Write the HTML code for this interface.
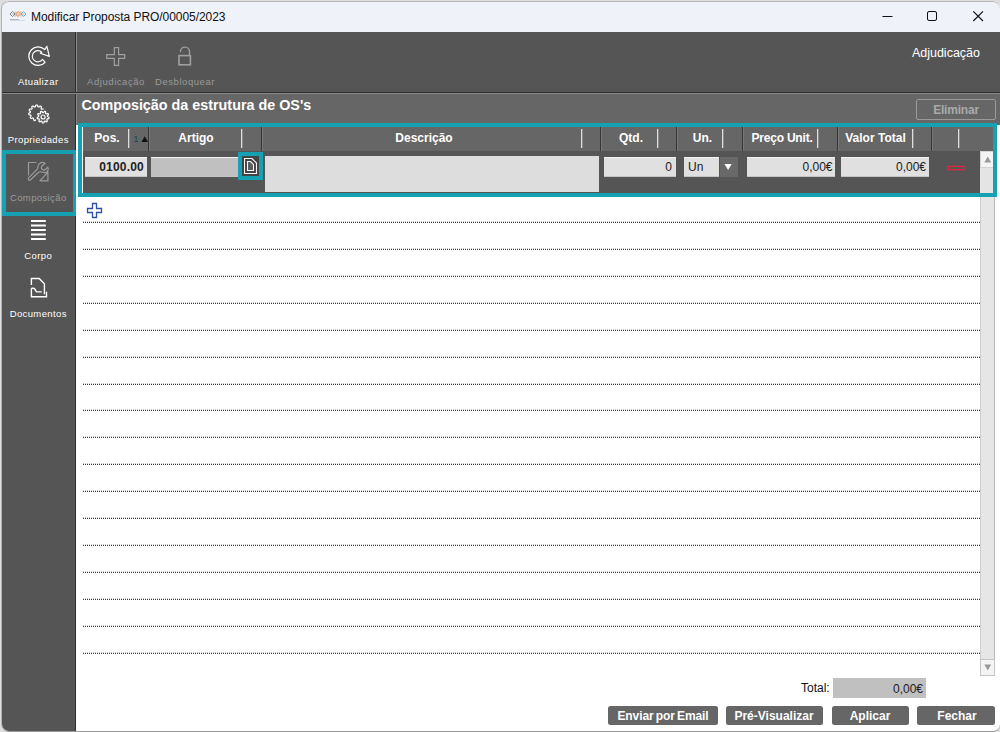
<!DOCTYPE html>
<html lang="pt">
<head>
<meta charset="utf-8">
<title>Modificar Proposta PRO/00005/2023</title>
<style>
*{box-sizing:border-box;margin:0;padding:0}
html,body{width:1000px;height:732px;overflow:hidden;background:#dedede;font-family:"Liberation Sans",sans-serif;}
.abs{position:absolute}
#win{position:absolute;left:2px;top:1px;width:998px;height:730px;background:#fff;border-radius:7px;overflow:hidden;box-shadow:-1px 0 0 0 #b4b4b4,0 1px 0 0 #9a9a9a;}
#title{position:absolute;left:0;top:0;width:998px;height:31px;background:#eff2f9;box-shadow:inset 0 1px 0 #b9b9b9;border-radius:7px 7px 0 0}
#title .txt{position:absolute;left:29px;top:8.500px;font-size:12px;color:#111;white-space:nowrap;letter-spacing:-0.05px}
#side{position:absolute;left:0;top:31px;width:73px;height:699px;background:#555;}
#vline{position:absolute;left:73px;top:31px;width:2px;height:699px;background:#888;border-left:1px solid #2e2e2e}
#hline{position:absolute;left:0;top:91px;width:998px;height:2px;background:#888;border-top:1px solid #2e2e2e}
#top{position:absolute;left:75px;top:31px;width:923px;height:60px;background:#555;}
#sec{position:absolute;left:75px;top:93px;width:923px;height:31px;background:#666;}
#sec .h{position:absolute;left:4.500px;top:2.600px;font-weight:bold;font-size:14.350px;color:#fff;white-space:nowrap}
.slab{position:absolute;left:0;width:72.500px;text-align:center;font-size:9.500px;color:#fff;white-space:nowrap;letter-spacing:0.380px;margin-top:0.900px}
.tlab{position:absolute;font-size:9.500px;color:#9a9a9a;white-space:nowrap;text-align:center;letter-spacing:0.550px;margin-top:0.900px}
#grid{position:absolute;left:76px;top:122px;width:919px;height:74px;background:#555;border:4px solid #16a1b2;}
.hdr{position:absolute;left:1px;top:0;width:910px;height:24px;background:#666}
.hc{position:absolute;top:4px;font-weight:bold;font-size:12px;color:#fff;text-align:center;white-space:nowrap}
.ws{position:absolute;top:2px;width:2px;height:19px;background:linear-gradient(90deg,#dedede 0,#dedede 1px,#8a8a8a 1px,#8a8a8a 2px)}
.ds{position:absolute;top:0;width:2px;height:24px;background:linear-gradient(90deg,#363636 0,#363636 1px,#787878 1px,#787878 2px)}
.inp{position:absolute;height:20px;background:#e0e0e0;font-size:12px;color:#222;text-align:right;padding:2px 3px 0 3px;white-space:nowrap;border-top:1px solid #f2f2f2;border-bottom:1px solid #c4c4c4}
.btn{position:absolute;top:705px;height:19px;background:#666;border-radius:2.500px;color:#fff;font-weight:bold;font-size:12px;text-align:center;line-height:20px;white-space:nowrap}
.dot{position:absolute;left:81px;width:897px;height:1px;background-image:repeating-linear-gradient(90deg,#3a3a3a 0,#3a3a3a 1px,transparent 1px,transparent 2px)}
.dot::before{content:"";position:absolute;left:0;top:-1px;width:897px;height:1px;opacity:.22;background-image:repeating-linear-gradient(90deg,#000 0,#000 1px,transparent 1px,transparent 2px)}
</style>
</head>
<body>
<div id="win">
  <div id="title">
    <svg class="abs" style="left:7px;top:8.500px;opacity:.8" width="18" height="12" viewBox="0 0 18 12">
      <g fill="none" stroke-width="1">
        <path d="M1 4 L3.5 1.5 L6 4 L3.5 6.5Z" stroke="#6a5aa8"/>
        <path d="M3.5 4 L6 1.5 L8.5 4 L6 6.5Z" stroke="#b8c24a"/>
        <path d="M6.5 4 L9 1.5 L11.5 4 L9 6.5Z" stroke="#e0524a"/>
        <path d="M9.5 4 L12 1.5 L14.5 4 L12 6.5Z" stroke="#f0b030"/>
        <path d="M12 4 L14.5 1.5 L17 4 L14.5 6.5Z" stroke="#38a0e0"/>
      </g>
      <rect x="1" y="9" width="9" height="1.4" fill="#aab"/>
      <rect x="10" y="10" width="6" height="0.8" fill="#ccd"/>
    </svg>
    <div class="txt">Modificar Proposta PRO/00005/2023</div>
    <svg class="abs" style="left:872px;top:0" width="126" height="31" viewBox="0 0 126 31">
      <g stroke="#111" stroke-width="1" fill="none">
        <path d="M8.5 15.5 H18.5"/>
        <rect x="53.500" y="10.500" width="9" height="9" rx="1.500"/>
        <path d="M99.300 10.300 L109 20 M109 10.300 L99.300 20" stroke-width="1.200"/>
      </g>
    </svg>
  </div>

  <div id="top">
    <div class="tlab" style="left:7px;top:43px;width:64px">Adjudicação</div>
    <div class="tlab" style="left:75px;top:43px;width:66px">Desbloquear</div>
    <div class="abs" style="right:20px;top:14px;font-size:12.500px;color:#fff">Adjudicação</div>
  </div>

  <div id="side">
    <div class="slab" style="top:43px">Atualizar</div>
    <div class="slab" style="top:101px">Propriedades</div>
    <div class="slab" style="top:159px;color:#9a9a9a">Composição</div>
    <div class="slab" style="top:217px">Corpo</div>
    <div class="slab" style="top:275px">Documentos</div>
  </div>

  <div id="vline"></div><div id="hline"></div>
  <div class="abs" style="left:0;top:149px;width:75px;height:66px;border:4px solid #16a1b2"></div>
  <div id="sec">
    <div class="h">Composição da estrutura de OS's</div>
    <div class="abs" style="left:839px;top:5px;width:80px;height:21px;border:1px solid #9a9a9a;border-radius:2px;color:#aaa;font-weight:bold;font-size:12px;letter-spacing:-0.200px;text-align:center;line-height:21px">Eliminar</div>
  </div>

  <div class="abs" style="left:74px;top:124px;width:2px;height:606px;background:#fff"></div>
  <div id="grid">
    <div class="abs" style="left:0;top:0;width:1px;height:66px;background:#fff"></div>
    <div class="hdr">
      <div class="hc" style="left:3px;width:42px">Pos.</div>
      <div class="ws" style="left:45px"></div>
      <div class="abs" style="left:50.500px;top:7px;font-size:8.500px;color:#0b4a52">1</div>
      <svg class="abs" style="left:57.500px;top:9px" width="8" height="7" viewBox="0 0 8 7"><path d="M0.500 6 L3.700 0.300 L7 6Z" fill="#111"/></svg>
      <div class="ds" style="left:65px"></div>
      <div class="hc" style="left:67px;width:92px">Artigo</div>
      <div class="ws" style="left:158px"></div>
      <div class="ds" style="left:178px"></div>
      <div class="hc" style="left:180px;width:322px">Descrição</div>
      <div class="ws" style="left:498px"></div>
      <div class="ds" style="left:517px"></div>
      <div class="hc" style="left:519px;width:58px">Qtd.</div>
      <div class="ws" style="left:574px"></div>
      <div class="ds" style="left:593px"></div>
      <div class="hc" style="left:595.500px;width:48px">Un.</div>
      <div class="ws" style="left:639px"></div>
      <div class="ds" style="left:659px"></div>
      <div class="hc" style="left:660px;width:78px;letter-spacing:-0.200px">Preço Unit.</div>
      <div class="ws" style="left:734px"></div>
      <div class="ds" style="left:754px"></div>
      <div class="hc" style="left:754.500px;width:76px">Valor Total</div>
      <div class="ws" style="left:829px"></div>
      <div class="ds" style="left:848px"></div>
      <div class="ws" style="left:875px"></div>
    </div>
    <div class="inp" style="left:3px;top:30px;width:62px;font-weight:bold;letter-spacing:0.200px">0100.00</div>
    <div class="inp" style="left:69px;top:30px;width:87px;background:#c0c0c0"></div>
    <div class="abs" style="left:156px;top:25px;width:25px;height:28px;border:4px solid #16a1b2;background:#444"></div>
    <svg class="abs" style="left:162px;top:31px" width="14" height="17" viewBox="0 0 14 17"><g fill="none" stroke="#f4f4f4" stroke-width="1.100"><path d="M0.500 0.500 H8 L12.500 5 V15.500 H0.500 Z"/><path d="M3.500 3.500 H6.500 L9.500 6.500 V12.500 H3.500 Z" fill="#5a5a5a"/></g></svg>
    <div class="abs" style="left:183px;top:29px;width:334px;height:36px;background:#ddd"></div>
    <div class="inp" style="left:522px;top:30px;width:71.500px;padding-right:3.500px">0</div>
    <div class="inp" style="left:601.500px;top:30px;width:35.500px;text-align:left;padding-left:4.500px">Un</div>
    <div class="abs" style="left:638px;top:29.500px;width:17.500px;height:20.500px;background:#696969"></div>
    <svg class="abs" style="left:642px;top:36px" width="8" height="8" viewBox="0 0 8 8"><path d="M0.500 1 H7.700 L4.100 7Z" fill="#fff"/></svg>
    <div class="inp" style="left:664.500px;top:30px;width:88.500px;padding-right:2.500px">0,00€</div>
    <div class="inp" style="left:759px;top:30px;width:88px">0,00€</div>
    <svg class="abs" style="left:864px;top:36px" width="20" height="10" viewBox="0 0 20 10"><rect x="2.400" y="3.400" width="15.400" height="3.300" fill="none" stroke="#d8283a" stroke-width="1.300"/></svg>
    <div class="abs" style="left:898px;top:24px;width:13px;height:42px;background:#e4e4e4"></div>
    <div class="abs" style="left:898px;top:24px;width:13px;height:17px;background:#f4f4f4;border:1px solid #d4d4d4;border-right:0"></div>
    <svg class="abs" style="left:902px;top:29px" width="8" height="7" viewBox="0 0 8 7"><path d="M0.300 6.500 H7.200 L3.750 0.500Z" fill="#9a9a9a"/></svg>
  </div>

  <!-- scrollbar -->
  <div class="abs" style="left:978px;top:196px;width:15px;height:479px;background:#e6e6e6;border-left:1px solid #cdcdcd;border-right:1px solid #b8b8b8"></div>
  <div class="abs" style="left:978px;top:658px;width:15px;height:17px;background:#f4f4f4;border:1px solid #c4c4c4"></div>
  <svg class="abs" style="left:982px;top:663px" width="8" height="7" viewBox="0 0 8 7"><path d="M0.300 0.500 H7.200 L3.750 6.500Z" fill="#9a9a9a"/></svg>

  <!-- plus -->
  <svg class="abs" style="left:84px;top:201px" width="17" height="17" viewBox="0 0 17 17"><path d="M6.500 1.500 H10.500 V6.500 H15.500 V10.500 H10.500 V15.500 H6.500 V10.500 H1.500 V6.500 H6.500 Z" fill="#fff" stroke="#2f4fa0" stroke-width="1.300"/></svg>

  <div class="dot" style="top:221px"></div>
  <div class="dot" style="top:248px"></div>
  <div class="dot" style="top:275px"></div>
  <div class="dot" style="top:302px"></div>
  <div class="dot" style="top:329px"></div>
  <div class="dot" style="top:356px"></div>
  <div class="dot" style="top:383px"></div>
  <div class="dot" style="top:409px"></div>
  <div class="dot" style="top:436px"></div>
  <div class="dot" style="top:463px"></div>
  <div class="dot" style="top:490px"></div>
  <div class="dot" style="top:517px"></div>
  <div class="dot" style="top:544px"></div>
  <div class="dot" style="top:571px"></div>
  <div class="dot" style="top:598px"></div>
  <div class="dot" style="top:625px"></div>
  <div class="dot" style="top:652px"></div>

  <div class="abs" style="left:799px;top:680px;font-size:12px;color:#111">Total:</div>
  <div class="abs" style="left:831px;top:677px;width:93px;height:20px;background:#c0c0c0;font-size:12px;color:#222;text-align:right;padding:4px 3px 0 0">0,00€</div>

  <div class="btn" style="left:606px;width:110px;word-spacing:-1px;letter-spacing:-0.100px">Enviar por Email</div>
  <div class="btn" style="left:723.500px;width:97px">Pré-Visualizar</div>
  <div class="btn" style="left:829.500px;width:77px">Aplicar</div>
  <div class="btn" style="left:915px;width:78px;padding-left:2px">Fechar</div>
<svg id="icons" class="abs" style="left:0;top:0;pointer-events:none" width="998" height="730" viewBox="2 1 998 730">
    <g fill="none" stroke-linejoin="round" stroke-linecap="round">
      <!-- atualizar -->
      <path d="M44.700 49.600 L46.900 46.300 L49.300 56.400 L40.300 53.300 L41.800 52.200 A5.600 5.600 0 1 0 42.500 59.400 L45.100 62.300 A9.300 9.300 0 1 1 44.700 49.600 Z" stroke="#fff" stroke-width="1.200"/>
      <!-- plus -->
      <path d="M114.300 47.600 H118.600 V54.600 H124.700 V58.400 H118.600 V65.400 H114.300 V58.400 H106.700 V54.600 H114.300 Z" stroke="#a0a0a0" stroke-width="1.200" stroke-linejoin="miter"/>
      <!-- lock -->
      <path d="M180.500 51.500 A4.500 4.500 0 0 1 189.500 51.800 V55" stroke="#a0a0a0" stroke-width="1.400"/>
      <rect x="179" y="55.600" width="11.400" height="9.200" stroke="#a0a0a0" stroke-width="1.600" stroke-linejoin="miter"/>
      <!-- propriedades -->
      <path d="M48.3 117.0 L48.9 117.3 L49.0 117.6 L49.0 117.9 L48.9 118.1 L48.9 118.4 L48.7 118.7 L48.1 118.8 L47.5 118.8 L47.1 118.9 L47.0 119.1 L46.9 119.3 L46.8 119.4 L46.7 119.6 L47.0 120.1 L47.2 120.7 L47.4 121.2 L47.2 121.4 L46.9 121.5 L46.7 121.7 L46.5 121.9 L46.0 121.7 L45.5 121.4 L45.1 121.0 L44.9 121.1 L44.7 121.2 L44.5 121.2 L44.3 121.3 L44.1 121.6 L44.0 122.2 L43.8 122.8 L43.5 122.9 L43.2 122.9 L43.0 122.9 L42.7 122.9 L42.4 122.8 L42.2 122.2 L42.1 121.6 L41.9 121.3 L41.7 121.2 L41.5 121.2 L41.3 121.1 L41.1 121.0 L40.7 121.4 L40.2 121.7 L39.7 121.9 L39.5 121.7 L39.3 121.5 L39.0 121.4 L38.8 121.2 L39.0 120.7 L39.2 120.1 L39.5 119.6 L39.4 119.4 L39.3 119.3 L39.2 119.1 L39.1 118.9 L38.7 118.8 L38.1 118.8 L37.5 118.7 L37.3 118.4 L37.3 118.1 L37.2 117.9 L37.2 117.6 L37.3 117.3 L37.9 117.0 L38.5 116.8 L38.7 116.6 L38.7 116.4 L38.7 116.1 L38.8 115.9 L38.8 115.7 L38.3 115.3 L37.9 114.9 L37.7 114.5 L37.8 114.2 L38.0 114.0 L38.1 113.7 L38.3 113.5 L38.8 113.6 L39.4 113.8 L39.9 113.9 L40.1 113.7 L40.2 113.6 L40.4 113.5 L40.6 113.3 L40.6 112.9 L40.5 112.3 L40.5 111.7 L40.7 111.5 L41.0 111.4 L41.3 111.3 L41.5 111.3 L41.9 111.4 L42.2 111.9 L42.5 112.5 L42.8 112.6 L43.0 112.6 L43.2 112.6 L43.4 112.6 L43.7 112.5 L44.0 111.9 L44.3 111.4 L44.7 111.3 L44.9 111.3 L45.2 111.4 L45.5 111.5 L45.7 111.7 L45.7 112.3 L45.6 112.9 L45.6 113.3 L45.8 113.5 L46.0 113.6 L46.1 113.7 L46.3 113.9 L46.8 113.8 L47.4 113.6 L47.9 113.5 L48.1 113.7 L48.2 114.0 L48.4 114.2 L48.5 114.5 L48.3 114.9 L47.9 115.3 L47.4 115.7 L47.4 115.9 L47.5 116.1 L47.5 116.4 L47.5 116.6 L47.7 116.8 L48.3 117.0Z" stroke="#fff" stroke-width="1.200"/>
      <circle cx="43.100" cy="117" r="2" stroke="#fff" stroke-width="1.200"/>
      <path d="M43.4 109.0 L42.8 109.0 L42.2 109.1 L41.7 109.2 L41.6 109.0 L41.4 108.9 L41.3 108.7 L41.2 108.6 L41.0 108.4 L41.1 108.0 L41.3 107.5 L41.4 106.9 L41.3 106.6 L41.1 106.4 L40.9 106.3 L40.7 106.1 L40.4 106.0 L40.2 106.0 L39.7 106.3 L39.3 106.7 L38.9 107.0 L38.7 107.0 L38.5 106.9 L38.3 106.8 L38.1 106.8 L37.9 106.7 L37.7 106.3 L37.6 105.8 L37.4 105.2 L37.1 105.0 L36.9 105.0 L36.6 105.0 L36.3 105.0 L36.1 105.0 L35.8 105.2 L35.6 105.7 L35.5 106.3 L35.3 106.7 L35.1 106.8 L34.9 106.8 L34.7 106.9 L34.5 107.0 L34.3 107.0 L34.0 106.7 L33.5 106.3 L33.1 106.0 L32.8 106.0 L32.5 106.1 L32.3 106.3 L32.1 106.4 L31.9 106.6 L31.8 106.9 L31.9 107.4 L32.1 108.0 L32.2 108.4 L32.0 108.6 L31.9 108.7 L31.8 108.9 L31.6 109.0 L31.5 109.2 L31.0 109.1 L30.4 109.0 L29.9 109.0 L29.6 109.2 L29.5 109.4 L29.4 109.6 L29.3 109.9 L29.2 110.1 L29.3 110.5 L29.7 110.9 L30.2 111.2 L30.5 111.5 L30.4 111.7 L30.4 111.9 L30.3 112.1 L30.3 112.4 L30.3 112.6 L29.8 112.8 L29.3 113.0 L28.8 113.3 L28.7 113.5 L28.8 113.8 L28.8 114.1 L28.8 114.3 L28.9 114.6 L29.2 114.8 L29.8 114.9 L30.3 115.0 L30.7 115.1 L30.8 115.3 L30.8 115.5 L30.9 115.7 L31.0 115.8 L31.1 116.0 L30.8 116.5 L30.5 117.0 L30.2 117.5 L30.3 117.7 L30.5 117.9 L30.7 118.1 L30.9 118.3 L31.0 118.5 L31.4 118.5 L32.0 118.3 L32.5 118.0 L32.8 117.9 L33.0 118.1 L33.2 118.2 L33.3 118.3 L33.5 118.4 L33.7 118.6 L33.7 119.1 L33.7 119.7 L33.7 120.2 L33.9 120.3 L34.2 120.4 L34.5 120.5 L34.7 120.6 L35.0 120.6 L35.3 120.4 L35.6 119.9" stroke="#fff" stroke-width="1.200"/>
      <!-- composicao -->
      <g stroke="#9c9c9c" stroke-width="1.200">
        <path d="M28.500 174.800 V162.500 H36"/>
        <path d="M39.900 180.900 H47.900 V172.200 Z"/>
        <path d="M28.600 177.800 L37 169.400 C38.600 167.800 37.400 165.800 38.900 164.200 C40.600 162.400 43.300 162.200 45.200 163.300 L42.200 165.700 C40.900 166.900 41.300 168.600 42.300 169.400 C43.300 170.200 44.600 170.100 45.500 169.300 L47.800 167.200 C48.600 169.200 47.900 171.200 46.300 172.300 C44.400 173.600 41 170.600 38.500 172.200 L30.600 179.700 A1.380 1.380 0 0 1 28.600 177.800 Z"/>
      </g>
      <!-- corpo -->
      <path d="M31 221 H45.800 M31 225.600 H45.800 M31 230 H45.800 M31 234.500 H45.800 M31 238.900 H45.800" stroke="#fff" stroke-width="2" stroke-linecap="butt"/>
      <!-- documentos -->
      <path d="M31.400 285 V278.500 H39.200 L44.400 283.800 V294.300 M31.400 288.300 H33.500 C35.500 288.300 35.600 291.900 37 291.900 H41.800 M31.400 288.300 V296.800 H46.500 V291.700" stroke="#fff" stroke-width="1.400" stroke-linejoin="miter" stroke-linecap="butt"/>
    </g>
  </svg>
</div>
</body>
</html>
